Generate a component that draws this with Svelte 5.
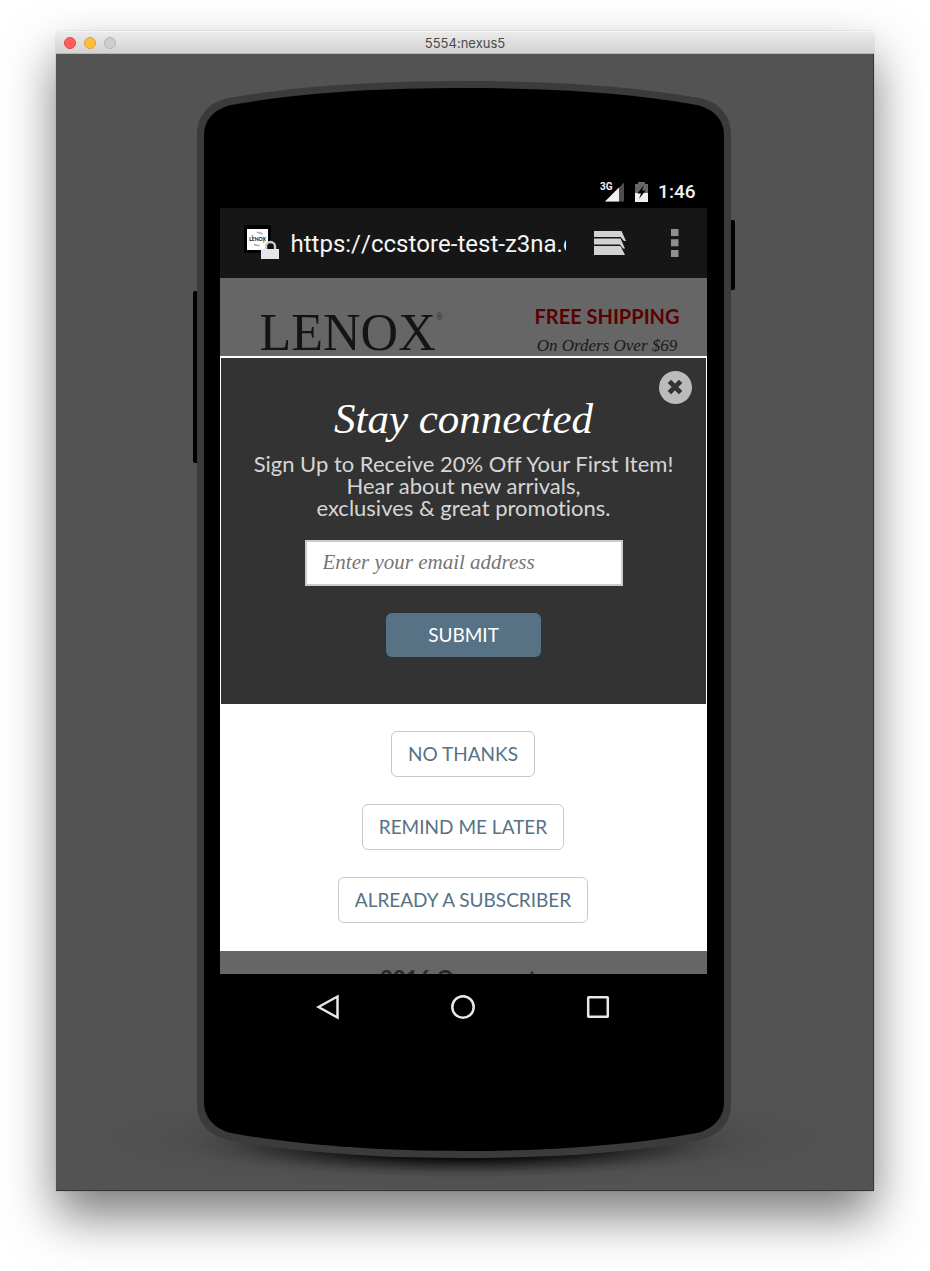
<script>
  let email = $state('');
  let address = $state('https://ccstore-test-z3na.com');
  const choices = ['NO THANKS', 'REMIND ME LATER', 'ALREADY A SUBSCRIBER'];
</script>

<div class="backdrop">
  <div class="window">
    <header class="titlebar">
      <div class="lights">
        <button class="light close" aria-label="Close window"></button>
        <button class="light minimise" aria-label="Minimise window"></button>
        <button class="light zoom" aria-label="Zoom window" disabled></button>
      </div>
      <h1>5554:nexus5</h1>
    </header>

    <main class="desk">
      <div class="phone">
        <svg class="body" viewBox="0 0 534 1077" preserveAspectRatio="none" aria-hidden="true">
          <defs>
            <radialGradient id="near">
              <stop offset="0" stop-color="#000" />
              <stop offset="0.4" stop-color="#000" stop-opacity="0.9" />
              <stop offset="0.65" stop-color="#000" stop-opacity="0.4" />
              <stop offset="0.85" stop-color="#000" stop-opacity="0.1" />
              <stop offset="1" stop-color="#000" stop-opacity="0" />
            </radialGradient>
            <radialGradient id="far">
              <stop offset="0" stop-color="#000" stop-opacity="0.4" />
              <stop offset="0.4" stop-color="#000" stop-opacity="0.18" />
              <stop offset="0.75" stop-color="#000" stop-opacity="0.04" />
              <stop offset="1" stop-color="#000" stop-opacity="0" />
            </radialGradient>
          </defs>
          <ellipse cx="267" cy="1058" rx="400" ry="52" fill="url(#far)" />
          <ellipse cx="267" cy="1064" rx="270" ry="32" fill="url(#near)" />
          <rect x="-4" y="210" width="8" height="172" rx="2" />
          <rect x="530" y="139" width="8" height="70" rx="2" />
          <path
            fill="#3b3b3b"
            d="M0 54C0 34 12 21 32 17C100 5 180 0 267 0S434 5 502 17C522 21 534 34 534 54V1023C534 1042 522 1055 502 1059C434 1072 354 1077 267 1077S100 1072 32 1059C12 1055 0 1042 0 1023Z"
          />
          <path
            d="M7 54C7 38 18 28 34 24C100 12 180 7 267 7S434 12 500 24C516 28 527 38 527 54V1021C527 1037 516 1048 500 1052C434 1064 354 1070 267 1070S100 1064 34 1052C18 1048 7 1037 7 1021Z"
          />
        </svg>

        <div class="screen">
          <div class="status">
            <svg width="25" height="21" viewBox="0 0 25 21" aria-label="3G signal">
              <path d="M5 20.500L24 1.500V20.500Z" fill="#4d4d4d" />
              <path d="M5 20.500L19 6.500V20.500Z" fill="#f0f0f0" />
              <text x="0" y="9" class="radio">3G</text>
            </svg>
            <svg class="battery" width="13" height="20" viewBox="0 0 13 20" aria-label="Battery charging">
              <path d="M0 2H3V0H10V2H13V11H0Z" fill="#666" />
              <path d="M0 11H13V20H0Z" fill="#f0f0f0" />
              <path d="M9 3L2.500 11.500H6L4 17L10.500 8.500H7Z" fill="#000" />
            </svg>
            <time>1:46</time>
          </div>

          <div class="browser">
            <svg width="36" height="36" viewBox="0 0 36 36" aria-label="Secure site">
              <rect width="27" height="28" fill="#000" />
              <rect x="3" y="4" width="21" height="21" fill="#fff" />
              <circle cx="14" cy="14" r="6.500" fill="none" stroke="#aaa" stroke-width="1.500" stroke-dasharray="6 4.200" stroke-dashoffset="2" />
              <rect x="5" y="12" width="17" height="4" fill="#fff" />
              <text x="13.500" y="15.800" class="mark">LENOX</text>
              <path d="M22 25V21.500A4.500 4.500 0 0 1 31 21.500V25" fill="#111" stroke="#ccc" stroke-width="2.400" />
              <rect x="17" y="24" width="18" height="10" fill="#e6e6e6" />
            </svg>
            <input class="address" type="text" aria-label="Address" bind:value={address} />
            <button class="tabs" aria-label="Tabs">
              <svg width="32" height="24" viewBox="0 0 32 24" fill="#d2d2d2">
                <path d="M0 0H27.500L32 10H30L26.500 6H0Z" />
                <path d="M0 7.500H26.500L31 17.500H29L26 13.500H0Z" />
                <path d="M0 15H26.500L31 24H0Z" />
              </svg>
            </button>
            <button class="menu" aria-label="Menu">
              <svg width="8" height="28" viewBox="0 0 8 28" fill="#8f8f8f">
                <path d="M0 0H7.500V7H0ZM0 10.300H7.500V17.300H0ZM0 21H7.500V28H0Z" />
              </svg>
            </button>
          </div>

          <div class="page">
            <div class="store">
              <a class="logo" href="#home">LENOX<sup>®</sup></a>
              <p class="promo"><strong>FREE SHIPPING</strong><em>On Orders Over $69</em></p>
            </div>

            <form class="signup" onsubmit={(e) => e.preventDefault()}>
              <button class="dismiss" type="button" aria-label="Close">
                <svg width="18" height="18" viewBox="0 0 16 16">
                  <path d="M3 3L13 13M13 3L3 13" stroke="#333" stroke-width="4.300" />
                </svg>
              </button>
              <h2>Stay connected</h2>
              <p>Sign Up to Receive 20% Off Your First Item!<br />Hear about new arrivals,<br />exclusives &amp; great promotions.</p>
              <input class="email" type="email" aria-label="Email address" placeholder="Enter your email address" bind:value={email} />
              <button class="submit" type="submit">SUBMIT</button>
            </form>

            <div class="choices">
              {#each choices as choice}
                <button>{choice}</button>
              {/each}
            </div>

            <div class="next"><a href="#ornaments">2016 Ornaments</a></div>
          </div>

          <nav class="keys">
            <button aria-label="Back">
              <svg width="24" height="26" viewBox="0 0 24 26"><path d="M2.500 13L21.500 2.500V23.500Z" /></svg>
            </button>
            <button aria-label="Home">
              <svg width="26" height="26" viewBox="0 0 26 26"><circle cx="13" cy="13" r="10.700" /></svg>
            </button>
            <button aria-label="Recent apps">
              <svg width="24" height="24" viewBox="0 0 24 24"><rect x="2.200" y="2.200" width="19.600" height="19.600" rx="0.500" /></svg>
            </button>
          </nav>
        </div>
      </div>
    </main>
  </div>
</div>

<style>
  :global(body) {
    margin: 0;
    background: #fff;
  }

  .backdrop,
  .backdrop * {
    box-sizing: border-box;
  }

  .backdrop {
    padding: 31px 56px 80px;
    overflow: hidden;
  }

  .window {
    border-radius: 5px 5px 0 0;
    box-shadow: 0 25px 50px rgba(0, 0, 0, 0.52), 0 0 1px rgba(0, 0, 0, 0.5);
  }

  button {
    padding: 0;
    border: 0;
    background: none;
    cursor: pointer;
  }

  svg {
    display: block;
  }

  .titlebar {
    display: grid;
    grid-template-columns: 1fr auto 1fr;
    align-items: center;
    height: 23px;
    padding: 1px 8px 0;
    border-bottom: 1px solid #b4b8b4;
    border-radius: 5px 5px 0 0;
    background: linear-gradient(#ececec, #d3d3d3);
    box-shadow: inset 0 1px #f6f6f6;
  }

  .titlebar h1 {
    margin: 0;
    color: #4a4a4a;
    font: 400 13px/20px Inter, sans-serif;
  }

  .lights {
    display: flex;
    gap: 8px;
  }

  .light {
    width: 12px;
    height: 12px;
    border: 1px solid #e0443e;
    border-radius: 50%;
    background: #ff5f57;
  }

  .minimise {
    border-color: #dea03a;
    background: #ffbd3c;
  }

  .zoom {
    border-color: #b4b4b4;
    background: #cdcdcd;
  }

  .desk {
    padding: 27px 18px 32px 16px;
    border-right: 1px solid #333;
    border-bottom: 1px solid #333;
    background: #535353;
    overflow: hidden;
  }

  .phone {
    position: relative;
    max-width: 534px;
    margin: 0 auto;
    padding: 94px 24px 118px 23px;
  }

  .body {
    position: absolute;
    inset: 0;
    width: 100%;
    height: 100%;
    overflow: visible;
  }

  .screen {
    position: relative;
  }

  .status {
    display: flex;
    align-items: center;
    justify-content: flex-end;
    height: 33px;
    padding-right: 11px;
  }

  .battery {
    margin: 0 10px;
  }

  .radio {
    fill: #f0f0f0;
    font: 700 10px Roboto, sans-serif;
  }

  .status time {
    color: #f0f0f0;
    font: 500 19px/32px Roboto, sans-serif;
  }

  .browser {
    display: flex;
    align-items: center;
    height: 70px;
    padding: 0 28px 0 24px;
    background: #161616;
  }

  .mark {
    fill: #000;
    font: 700 5px Lato, sans-serif;
    text-anchor: middle;
  }

  .address {
    flex: 1;
    min-width: 0;
    margin: 0 28px 0 10px;
    padding: 2px 0 0 1px;
    border: 0;
    background: none;
    color: #f4f4f4;
    font: 400 24px/34px Roboto, sans-serif;
    font-kerning: none;
  }

  .menu {
    margin-left: 45px;
  }

  .page {
    background: #666;
  }

  .store {
    display: flex;
    justify-content: space-between;
    height: 78px;
    padding: 24px 27px 0 40px;
  }

  .logo {
    padding-top: 5px;
    color: #141414;
    font: 400 52px/52px "Liberation Serif", serif;
    text-decoration: none;
    white-space: nowrap;
  }

  .logo sup {
    color: #333;
    font-size: 10px;
    line-height: 10px;
    vertical-align: 30px;
  }

  .promo {
    margin: 0;
    text-align: center;
    white-space: nowrap;
  }

  .promo strong,
  .promo em {
    display: block;
  }

  .promo strong {
    color: #5a0000;
    font: 700 20px/28px Lato, sans-serif;
  }

  .promo em {
    color: #1a1a1a;
    font: italic 400 17px/32px "Liberation Serif", serif;
  }

  .signup {
    position: relative;
    display: flex;
    flex-direction: column;
    align-items: center;
    padding: 36px 15px 47px 16px;
    border: 1px solid #fff;
    border-width: 2px 1px 0;
    background: #333;
    text-align: center;
  }

  .dismiss {
    position: absolute;
    top: 13px;
    right: 14px;
    display: grid;
    place-items: center;
    width: 33px;
    height: 33px;
    padding-bottom: 1px;
    border-radius: 50%;
    background: #bbb;
  }

  .signup h2 {
    margin: 0;
    color: #fff;
    font: italic 400 43px/50px "Liberation Serif", serif;
  }

  .signup p {
    margin: 9px 0 21px;
    color: #d6d6d6;
    font: 400 22px/22px Lato, sans-serif;
    font-variant-ligatures: none;
  }

  .email {
    width: 100%;
    max-width: 318px;
    height: 46px;
    padding: 0 16px 2px;
    border: 2px solid #ccc;
    border-radius: 0;
    background: #fff;
    font: italic 400 21px/26px "Liberation Serif", serif;
  }

  .email::placeholder {
    color: #757575;
  }

  .submit {
    width: 155px;
    height: 44px;
    margin-top: 27px;
    padding-bottom: 1px;
    border-radius: 6px;
    background: #577285;
    color: #fff;
    font: 400 19px/24px Lato, sans-serif;
  }

  .choices {
    display: flex;
    flex-direction: column;
    align-items: center;
    gap: 27px;
    padding: 27px 16px 28px;
    background: #fff;
  }

  .choices button {
    height: 46px;
    padding: 0 16px 1px;
    border: 1px solid #c8c8c8;
    border-radius: 6px;
    color: #577285;
    font: 400 19px/24px Lato, sans-serif;
  }

  .next {
    height: 23px;
    padding-top: 15px;
    overflow: hidden;
    text-align: center;
  }

  .next a {
    color: #1f2a32;
    font: 700 22px/26px Lato, sans-serif;
    text-decoration: none;
  }

  .keys {
    display: grid;
    grid-template-columns: repeat(3, 135px);
    justify-content: center;
    justify-items: center;
    align-items: center;
    height: 66px;
  }

  .keys svg {
    fill: none;
    stroke: #e8e8e8;
    stroke-width: 2.5;
  }
</style>
